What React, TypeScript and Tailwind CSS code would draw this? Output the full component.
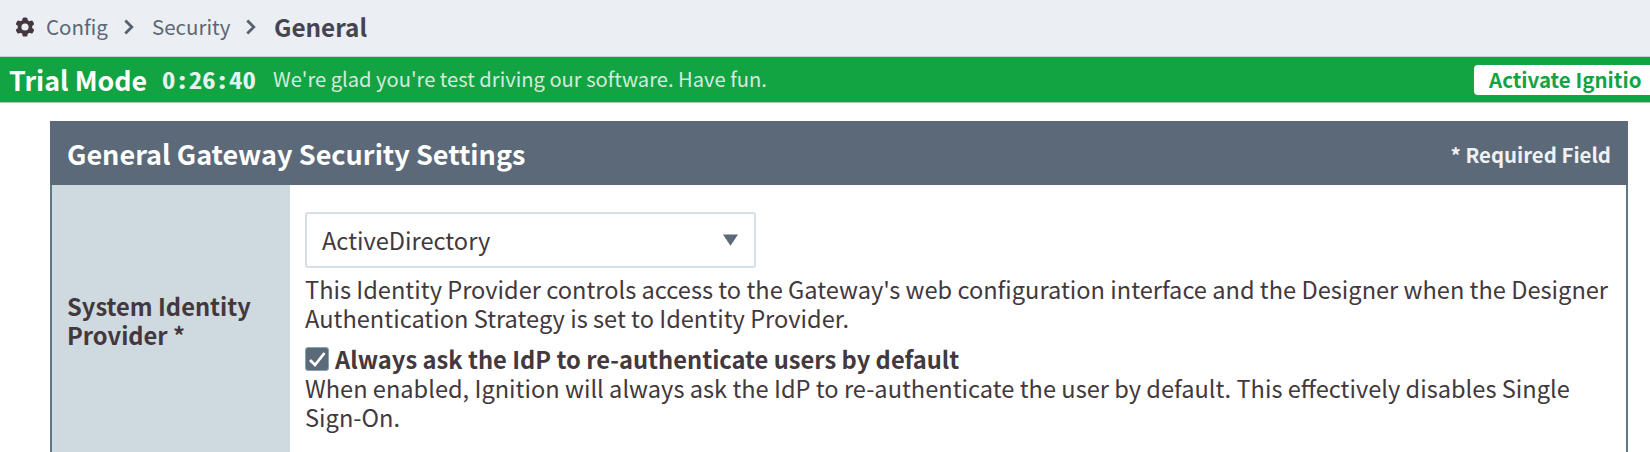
import React from 'react';

function Gear() {
  return (
    <svg viewBox="0 0 20 20" className="h-5 w-5 shrink-0">
      <g fill="#46383f">
        <rect x="7.4" y="0.4" width="5.2" height="19.2" rx="1.6" />
        <rect x="7.4" y="0.4" width="5.2" height="19.2" rx="1.6" transform="rotate(60 10 10)" />
        <rect x="7.4" y="0.4" width="5.2" height="19.2" rx="1.6" transform="rotate(120 10 10)" />
        <circle cx="10" cy="10" r="7.3" />
      </g>
      <circle cx="10" cy="10" r="3.6" fill="#ebeef3" />
    </svg>
  );
}

function Chevron() {
  return (
    <svg viewBox="0 0 10 16" className="h-4 w-2.5 shrink-0" fill="none" stroke="#56636f" strokeWidth="2.8">
      <path d="M1.3 1.5 7.8 8 1.3 14.5" />
    </svg>
  );
}

export default function App() {
  return (
    <div className="h-[452px] w-full overflow-hidden bg-white font-['Noto_Sans_CJK_SC','Noto_Sans',sans-serif] text-[23.62px] leading-[28.5px] text-[#42383d]">
      <nav className="flex h-[57px] items-center whitespace-nowrap border-b border-[#c3ced8] bg-[#ebeef3] pb-[3px] pl-[15px] text-[20.5px] text-[#5b6775]">
        <Gear />
        <span className="ml-[11px] w-[78px]">Config</span>
        <Chevron />
        <span className="ml-[18px] w-[94px]">Security</span>
        <Chevron />
        <span className="ml-[18px] pt-px text-[24.3px] font-bold text-[#46444e]">General</span>
      </nav>
      <div className="flex h-[46px] items-center whitespace-nowrap border-b border-[#a3cbb8] bg-[#12a443] pl-[9px] text-white">
        <span className="w-[153px] pt-px text-[26.8px] font-bold">Trial Mode</span>
        <span className="w-[111px] origin-left scale-x-[1.165] font-['Noto_Sans_Mono_CJK_SC','Liberation_Mono',monospace] text-[23px] font-bold text-[#e8f1f0]">0:26:40</span>
        <span className="text-[20.15px] text-[#d5eade]">We're glad you're test driving our software. Have fun.</span>
        <button className="ml-auto h-[30px] w-[176px] shrink-0 rounded-l-sm bg-white pl-[15px] text-left text-[20.5px] font-bold text-[#12a443]">Activate Ignitio</button>
      </div>
      <main className="ml-[50px] mt-[18px] h-[340px] w-[1578px] border-x-2 border-[#5b7885]">
        <header className="-mx-0.5 flex h-16 items-center justify-between bg-[#5c6978] pl-[17px] pr-[17px] pt-[3px] text-white">
          <h1 className="text-[27.05px] font-bold">General Gateway Security Settings</h1>
          <span className="text-[20.4px] font-bold text-[#eef2f5]">* Required Field</span>
        </header>
        <div className="flex h-[276px]">
          <div className="w-[238px] bg-[#cfd9e0] pl-[15px] pt-[107px] text-[23.7px] font-bold">
            System Identity<br />Provider *
          </div>
          <div className="flex flex-col whitespace-nowrap pl-[15px] pt-[27px]">
            <div className="flex h-[56px] w-[451px] items-center justify-between rounded-[3px] border-2 border-[#d5dfe8] pl-[15px] pr-[16px]">
              <span>ActiveDirectory</span>
              <svg viewBox="0 0 16 12" className="h-3 w-[15px]"><path d="M0 0h16L8 12Z" fill="#5c6978" /></svg>
            </div>
            <p className="mt-[7px]">
              This Identity Provider controls access to the Gateway's web configuration interface and the Designer when the Designer<br />
              Authentication Strategy is set to Identity Provider.
            </p>
            <label className="mt-[12px] flex h-[30px] items-center text-[23.7px] font-bold">
              <svg viewBox="0 0 24 24" className="mr-[6px] h-6 w-6">
                <rect x="0.5" y="0.5" width="23" height="23" rx="2.5" fill="#5c6978" stroke="#83a7b4" />
                <path d="m5 13 5 5 9.5-12" fill="none" stroke="#fff" strokeWidth="2.8" />
              </svg>
              Always ask the IdP to re-authenticate users by default
            </label>
            <p>
              When enabled, Ignition will always ask the IdP to re-authenticate the user by default. This effectively disables Single<br />
              Sign-On.
            </p>
          </div>
        </div>
      </main>
    </div>
  );
}
